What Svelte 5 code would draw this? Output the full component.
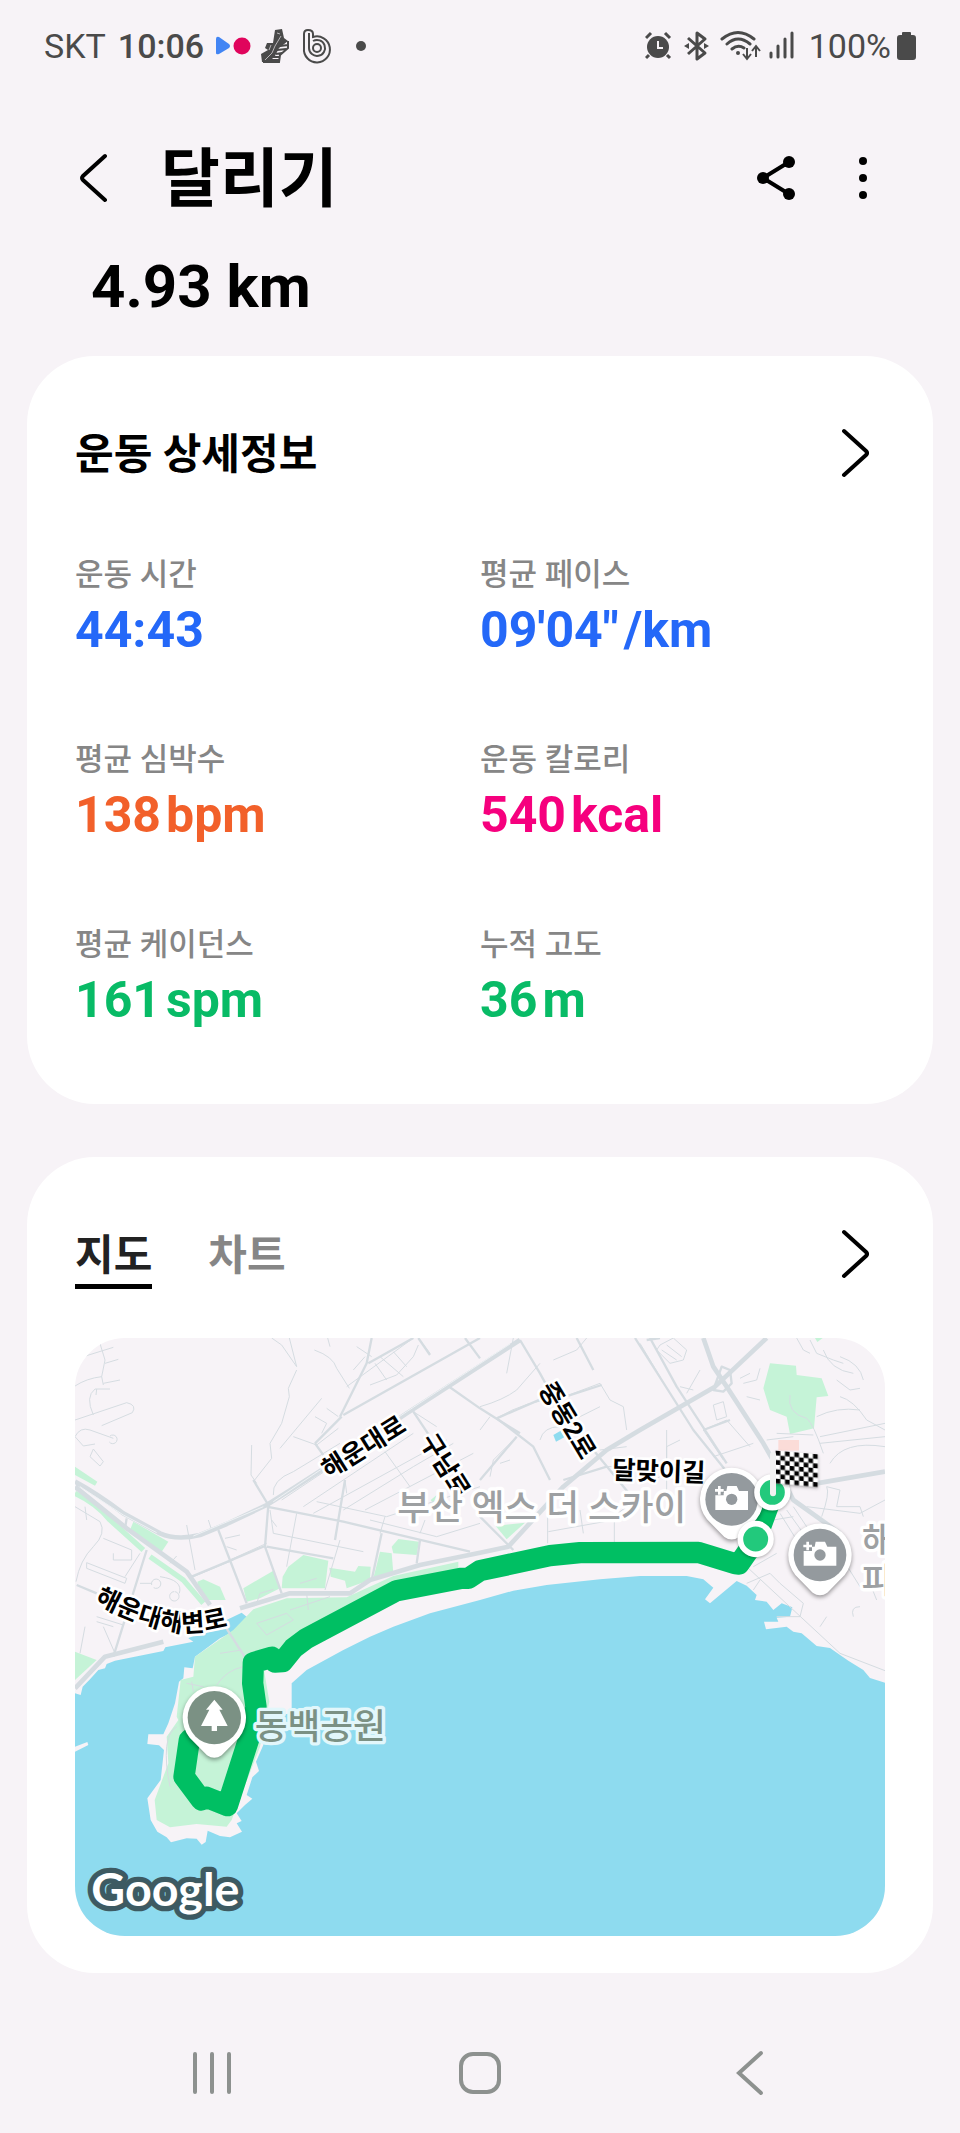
<script>
  const metrics = [
    { label: '운동 시간', value: '44:43', unit: '', tone: 'blue' },
    { label: '평균 페이스', value: '09\'04"', unit: '/km', tone: 'blue' },
    { label: '평균 심박수', value: '138', unit: 'bpm', tone: 'orange' },
    { label: '운동 칼로리', value: '540', unit: 'kcal', tone: 'pink' },
    { label: '평균 케이던스', value: '161', unit: 'spm', tone: 'green' },
    { label: '누적 고도', value: '36', unit: 'm', tone: 'green' },
  ];

  const tabs = [
    { id: 'map', label: '지도' },
    { id: 'chart', label: '차트' },
  ];

  let activeTab = $state('map');

  const photoSpots = [
    { x: 2015, y: 538 },
    { x: 2280, y: 705 },
  ];

  // dark squares of the finish flag
  const flagCells = [];
  for (let row = 0; row < 7; row += 1) {
    for (let col = 0; col < 9; col += 1) {
      if ((row + col) % 2 === 0) {
        flagCells.push({ x: col * 14, y: row * 14 });
      }
    }
  }
</script>

{#snippet chevron()}
  <svg width="28" height="52" viewBox="0 0 28 52" aria-hidden="true">
    <path d="M3 4 L25 24 Q27 26 25 28 L3 48" class="line" />
  </svg>
{/snippet}

<div class="screen">
  <div class="status-bar">
    <div class="status-left">
      <span>SKT</span>
      <span class="clock">10:06</span>
      <svg class="status-apps" width="156" height="40" viewBox="0 0 156 40" aria-hidden="true">
        <path d="M1 13 Q1 10 4 11 L14 18 Q16 20 14 22 L4 28 Q1 29 1 27Z" fill="#4285f4" />
        <circle cx="27" cy="20" r="8.500" fill="#e0045c" />
        <path
          d="M47 36 L46 28 53 24 50 22 52 17 58 17 60 4 67 3 69 12 73 15 64 22 60 30 54 36Z"
          fill="#4a4a4a"
        />
        <path
          d="M73 15 L73 22 65 29 64 36 H48 M65 20 L73 19 M62 24 L71 23 M61 28 L67 27 M58 31 H65 M55 34 H64"
          stroke="#4a4a4a"
          stroke-width="2"
          fill="none"
        />
        <path
          d="M66 10 L60 20 57 27 50 34 M62 7 L65 8 M56 19 L54 24"
          stroke="#b9b6b9"
          fill="none"
        />
        <g fill="none" stroke="#4a4a4a" stroke-width="2">
          <path d="M89 22 V8 Q89 4 93 4 Q98 4 98 8 V11 A13 13 0 1 1 89 22Z" />
          <path d="M94 7 V22 A8 8 0 1 0 98 15" />
          <circle cx="102" cy="22" r="4" />
        </g>
        <circle cx="146" cy="20" r="5" fill="#4a4a4a" />
      </svg>
    </div>
    <div class="status-right">
      <svg width="150" height="40" viewBox="0 0 150 40" aria-hidden="true">
        <g fill="#4a4a4a">
          <circle cx="13" cy="21" r="11" />
          <path d="M4 29 L1 32 M22 29 L25 32 M1 12 L6 7 M25 12 L20 7" stroke="#4a4a4a" stroke-width="3" />
          <path d="M13 15 V22 H18" stroke="#f7f3f7" stroke-width="2" fill="none" />
          <path d="M39 20 l5 -3 v6Z M64 20 l-5 -3 v6Z" />
          <circle cx="93" cy="27" r="2" />
        </g>
        <g fill="none" stroke="#4a4a4a" stroke-width="3">
          <path d="M43 12 L60 27 52 33 V7 L60 13 43 28" stroke-linejoin="round" />
          <path d="M77 13 Q93 0 109 13 M82 18 Q93 8 105 18 M87 23 Q93 18 99 22" stroke-linecap="round" />
          <path d="M102 22 V32 M98 28 L102 33 106 28 M111 31 V21 M107 25 L111 20 115 25" stroke-width="2" />
          <path d="M126 27 V31 M133 20 V31 M140 13 V31 M147 7 V31" stroke-linecap="round" />
        </g>
      </svg>
      <span>100%</span>
      <svg width="19" height="28" viewBox="0 0 19 28" aria-hidden="true">
        <path
          d="M5 1 Q5 0 6 0 H13 Q14 0 14 1 V3 H16 Q19 3 19 6 V25 Q19 28 16 28 H3 Q0 28 0 25 V6 Q0 3 3 3 H5Z"
          fill="#4a4a4a"
        />
      </svg>
    </div>
  </div>

  <header class="app-bar">
    <button class="icon-button" aria-label="뒤로">
      <svg width="28" height="52" viewBox="0 0 28 52" aria-hidden="true">
        <path d="M26 4 L4 24 Q2 26 4 28 L26 48" class="line" />
      </svg>
    </button>
    <h1>달리기</h1>
    <button class="icon-button" aria-label="공유">
      <svg width="40" height="44" viewBox="0 0 40 44" aria-hidden="true">
        <path d="M33 6 L7 22 33 38" fill="none" stroke="#000" stroke-width="4" />
        <circle cx="33" cy="6" r="6" />
        <circle cx="7" cy="22" r="6" />
        <circle cx="33" cy="38" r="6" />
      </svg>
    </button>
    <button class="icon-button" aria-label="더보기">
      <svg width="8" height="44" viewBox="0 0 8 44" aria-hidden="true">
        <circle cx="4" cy="5" r="4" />
        <circle cx="4" cy="22" r="4" />
        <circle cx="4" cy="39" r="4" />
      </svg>
    </button>
  </header>

  <p class="distance">4.93 km</p>

  <main>
    <section class="card details">
      <div class="card-header">
        <h2>운동 상세정보</h2>
        <button class="icon-button" aria-label="운동 상세정보 열기">{@render chevron()}</button>
      </div>
      <dl class="metrics">
        {#each metrics as metric (metric.label)}
          <div class="metric">
            <dt>{metric.label}</dt>
            <dd class={metric.tone}>
              <span>{metric.value}</span>
              {#if metric.unit}<span>{metric.unit}</span>{/if}
            </dd>
          </div>
        {/each}
      </dl>
    </section>

    <section class="card">
      <div class="card-header">
        <div class="tabs" role="tablist">
          {#each tabs as tab (tab.id)}
            <button
              class="tab"
              class:active={activeTab === tab.id}
              role="tab"
              aria-selected={activeTab === tab.id}
              onclick={() => (activeTab = tab.id)}>{tab.label}</button
            >
          {/each}
        </div>
        <button class="icon-button" aria-label="지도 열기">{@render chevron()}</button>
      </div>

      <svg class="map" viewBox="45 54 2430 1794" role="img" aria-label="달리기 경로">
        <rect x="45" y="54" width="2430" height="1794" fill="#f7f3f7" />

        <!-- sea -->
        <path
          class="water"
          d="M45 1120 L62 1125 68 1100 90 1078 115 1050 135 1045 140 1032 165 1022 310 993 316 982 400 965 385 955 545 878 572 900 520 935 480 955 405 1010 398 1045 373 1042 370 1075 357 1085 345 1150 325 1210 310 1243 265 1243 262 1272 297 1276 312 1290 302 1380 280 1410 262 1435 272 1500 292 1535 320 1552 333 1567 380 1555 410 1556 425 1574 437 1566 443 1532 480 1548 510 1552 546 1535 530 1510 545 1503 530 1480 555 1455 577 1436 560 1425 577 1372 597 1353 588 1325 610 1275 622 1190 695 1180 695 1090 740 1050 850 990 930 950 1000 920 1110 880 1260 840 1360 812 1460 795 1620 778 1740 768 1880 768 1930 778 1960 803 1935 838 1950 850 2030 783 2060 797 2090 825 2085 840 2120 845 2140 870 2165 850 2197 862 2190 890 2150 893 2155 905 2112 905 2118 928 2180 920 2200 935 2225 940 2270 978 2310 984 2365 1022 2410 1050 2430 1074 2475 1088 V1848 H45 V1295 L85 1275 82 1266 45 1280Z"
        />
        <path class="water" d="M1480 345 L1502 332 1513 352 1488 365Z" />

        <!-- parks and greenways -->
        <g class="park">
          <path
            d="M405 1010 L520 930 580 868 680 835 860 832 1000 768 1195 725 1195 745 1000 840 700 980 612 1050 628 1145 600 1280 515 1500 500 1520 410 1512 330 1522 290 1500 284 1440 325 1330 320 1250 355 1200 350 1190 362 1080 400 1070Z"
          />
          <path d="M45 440 L112 485 105 497 45 465Z" />
          <path d="M220 605 L325 665 305 695 210 630Z" />
          <path d="M412 785 L430 778 480 800 497 840 445 840 415 800Z" />
          <path d="M550 805 L640 752 660 805 600 835 560 845Z" />
          <path d="M685 740 L730 705 805 722 795 805 665 805 668 770Z" />
          <path d="M808 743 L885 755 895 738 932 740 930 780 860 805 855 782 812 770Z" />
          <path d="M960 695 L995 700 1000 760 940 775Z" />
          <path d="M995 680 L1015 657 1077 665 1070 705 1000 700Z" />
          <path d="M1307 618 L1395 608 1340 658Z" />
          <path d="M45 995 L110 1020 45 1080Z" />
          <path d="M1112 540 L1130 525 1120 550Z" />
          <path d="M2130 130 L2208 137 2210 165 2285 175 2305 228 2270 232 2262 325 2190 342 2180 290 2130 270 2110 205Z" />
          <path d="M2265 54 L2288 54 2272 66Z" />
        </g>
        <path class="greenway" d="M45 520 Q110 550 150 600 L250 690 M270 710 L370 780 430 850" />
        <rect x="2155" y="360" width="62" height="32" fill="#fbdcd8" />

        <!-- side streets -->
        <path
          class="road minor"
          d="M45 198 Q80 175 125 170 L135 120 115 54 M70 110 L160 82 M135 130 L175 118 M130 190 L180 180 M125 170 L130 195 M100 285 Q75 230 105 207 H150 M110 207 L108 225 M45 300 L200 248 Q232 255 217 278 L125 317 M45 350 Q60 320 90 330 L160 355 M45 350 L70 378 105 372 M150 348 a13 13 0 1 1 -2 18 M90 410 L100 387 130 425 120 438Z"
        />
        <path
          class="road minor"
          d="M635 54 L665 75 710 140 688 54 M710 150 L685 205 688 230 665 310 630 370 635 415 580 485 M575 375 L573 465 590 490 M763 90 Q820 110 830 145 L868 205 M803 54 L810 80 M660 385 L785 235 M700 350 L770 375 835 325 M765 290 L800 310 785 340 M800 265 L835 290 M880 150 L915 110 M640 525 Q635 480 700 455 L840 370 M665 540 L860 410 M730 560 L1060 340 M760 580 L1160 360 M770 545 L980 590 1260 500 M850 570 L1060 440 1180 370 M915 570 L1240 400 M975 395 L1050 500 M1130 320 L1060 275"
        />
        <path
          class="road minor"
          d="M630 570 L640 640 910 695 M635 600 L650 620 M710 580 L680 740 M855 480 L860 520 M930 600 L1130 650 1260 610 M975 590 L960 640 M1095 600 L1080 640 M840 660 L795 810 M380 615 L405 750 M445 600 L455 630 M495 655 L540 645 M500 680 L530 690 M400 770 L520 720 M510 720 L620 670 M590 850 L600 820 640 808 M590 910 L680 880 700 900 620 945Z M690 870 L810 830 M740 820 L745 870 M720 790 L770 775 M330 730 L350 708"
        />
        <path
          class="road minor"
          d="M45 560 L120 605 Q140 640 100 680 Q60 720 48 785 M75 560 L80 600 M130 655 L215 690 V720 H160 V700 M80 728 L200 775 195 790 80 745Z M195 770 L240 700 M110 890 L190 915 M110 905 L160 920 M275 795 a14 14 0 1 1 6 8 M300 770 Q370 780 358 820 M342 815 a14 14 0 1 0 2 0 M240 790 L275 790 M165 1000 L130 920 M75 920 L60 1000 M480 1000 L545 990 M470 1095 Q500 1050 550 1040 M380 1090 L430 1100 M395 1085 L400 1115 M330 1400 Q315 1330 320 1280 Q325 1235 350 1220"
        />
        <path
          class="road minor"
          d="M860 200 L1060 54 M945 130 L980 180 M960 110 L1030 170 M1000 95 L1040 140 M930 195 L1010 165 1060 110 1075 75 M890 80 L935 110 M1075 54 L1110 100"
        />
        <path
          class="road minor"
          d="M1260 260 Q1330 240 1370 210 L1440 130 M1310 295 Q1400 240 1500 235 L1620 190 1650 240 1690 260 M1340 160 L1360 54 M1550 54 L1600 150 M1480 120 L1550 90 1580 54 M1440 360 Q1450 320 1500 320 L1620 260 M1370 350 L1300 420 1290 470 M1320 430 L1350 420 M1260 330 L1290 290 M1690 260 L1700 330 M1620 390 L1700 380 M1640 440 L1760 440 M1780 480 L1820 460 1820 380 M1820 380 L1860 360 M1820 330 V540"
        />
        <path
          class="road minor"
          d="M1790 90 L1830 130 1870 120 1880 90 1840 54 1800 75Z M1805 90 L1850 120 M1820 75 L1865 110 M1740 70 L1800 170 M1860 200 L1900 210 M1880 220 L1920 150 M1960 255 L1990 245 2000 290 1970 300Z M1930 330 L2000 300 2070 380 M1960 410 L2080 370 M1930 330 L1990 420 M2050 190 L2090 180 2100 145 M2060 230 L2100 240 M2070 160 L2040 175"
        />
        <path
          class="road minor"
          d="M2210 54 L2230 90 2250 100 M2250 60 L2270 100 2320 120 2350 130 M2290 90 Q2310 150 2380 160 M2340 110 Q2400 130 2410 180 M2330 180 L2370 210 2400 205 M2340 230 Q2380 240 2420 300 L2475 330 M2270 290 Q2330 260 2400 270 M2280 350 L2475 310 M2280 370 L2475 350 M2310 430 Q2350 360 2475 380 M2190 225 Q2180 280 2240 295 Q2260 310 2290 400 M2150 340 L2260 345 M2120 360 L2200 350 M2285 590 Q2310 520 2300 500 L2340 510 2330 560 2400 560 2410 590 M2240 560 L2400 580 2475 540"
        />
        <path
          class="road minor"
          d="M1463 560 V670 M1663 600 V668 M1465 635 L1660 600 M1560 570 L1570 640 M1660 590 L1700 560 M2160 580 L2210 660 M2180 570 L2230 640 M2200 560 L2260 650 M2140 600 L2200 590 M2060 790 L2130 760 2160 790 2230 850 2220 890 2150 890 M2060 740 L2340 1000 2475 1052 M2080 740 L2150 700 M2100 780 L2080 810 M2280 920 L2300 890 M2380 890 Q2370 860 2400 860 M2430 790 L2450 840 M2350 720 L2400 800"
        />

        <!-- through roads -->
        <path
          class="road medium"
          d="M840 290 L920 130 935 54 M925 130 L1060 54 M850 285 L1260 54 M765 370 L845 290 M765 370 L790 405 M580 480 L625 555 615 680 665 820 M855 480 L825 660 M620 560 L850 605 1230 695 M620 680 L820 715 M475 630 L560 850 M395 770 L615 678 M965 640 L935 780 M1080 660 L1070 730 M1060 275 L1110 350 M1160 195 L1260 265 1380 340 M1075 54 L1110 105 M1215 54 L1260 115 M200 595 L195 625 M50 795 L110 820 M260 690 L160 1010 M490 910 L560 1020"
        />
        <path
          class="road medium"
          d="M1380 60 L1440 160 1500 270 M1310 295 L1460 230 M1310 295 L1420 380 1470 480 M1500 235 L1625 195 M1600 390 L1740 560 M1550 54 L1600 150 M1800 54 L1760 60 M1725 54 L1900 330 2020 480 M1770 54 L1850 200 2000 430 M1985 140 L1960 210 1990 215 2015 190 2010 150Z M1930 330 L2010 300 M1260 590 L1360 690 M1370 350 L1260 480 M1510 480 L1640 440"
        />
        <path
          class="road major"
          d="M45 485 Q110 520 190 580 L300 640 Q350 662 420 645 L500 612 620 555 700 505 840 415 1040 280 1380 60 M45 500 L200 625 380 755 450 855 M2120 54 L1965 200 1740 330 1640 390 1510 500 1345 680 1260 698 1080 735 930 780 870 820 690 820 540 865 M1930 54 L1960 140 2000 200 2110 370 2150 440 2200 540 2340 640 M2475 455 L2270 490 M45 1105 L135 1010 310 965"
        />
        <path class="road core" d="M640 545 L1040 275 1350 72 M60 500 L190 585 290 638 M400 648 L610 560" />

        <!-- route -->
        <path
          class="route"
          d="M2135 530 L2087 660 2037 732 2025 731 1915 697 1560 698 1470 707 1260 752 1225 775 1205 775 1010 812 740 955 700 985 668 1025 645 1026 635 1012 580 1028 578 1090 588 1160 575 1230 502 1457 440 1432 424 1440 372 1370 388 1260 463 1200"
        />

        <g class="road-label">
          <text transform="translate(806 478) rotate(-32)">해운대로</text>
          <text transform="translate(1078 362) rotate(58)">구남로</text>
          <text transform="translate(1434 206) rotate(59)">중동2로</text>
          <text transform="translate(1656 476) rotate(2)">달맞이길</text>
          <path id="beach-road" d="M102 848 Q230 915 340 934 Q430 945 570 898" fill="none" stroke="none" />
          <text><textPath href="#beach-road">해운대해변로</textPath></text>
        </g>

        <text class="place" x="1012" y="600">부산 엑스 더 스카이</text>
        <text class="place" x="2405" y="700">해</text>
        <text class="place" x="2405" y="820">파</text>
        <text class="place green-place" x="584" y="1256">동백공원</text>

        {#each photoSpots as spot (spot.x)}
          <g transform="translate({spot.x} {spot.y})">
            <path class="pin" d="M-74 60 A95 95 0 1 1 74 60 L22 113 Q0 128 -22 113Z" />
            <circle r="79" fill="#949a9e" />
            <path d="M-49 -12 H-24 V-25 H-16 L-13 -40 H15 L22 -25 H49 V32 H-49Z" fill="#fff" />
            <path d="M-37 -40 V-14 M-50 -27 H-24" stroke="#949a9e" stroke-width="16" />
            <path d="M-37 -40 V-14 M-50 -27 H-24" stroke="#fff" stroke-width="8" />
            <circle r="17" fill="#949a9e" />
          </g>
        {/each}

        <g transform="translate(463 1193)">
          <path class="pin" d="M-74 60 A95 95 0 1 1 74 60 L22 113 Q0 128 -22 113Z" />
          <circle r="80" fill="#7b9184" />
          <path d="M0 -54 L25 -24 H15 L40 25 H8 V40 H-8 V25 H-40 L-15 -24 H-25Z" fill="#fff" />
        </g>

        <g class="stop">
          <circle cx="2137" cy="517" r="46" />
          <circle cx="2087" cy="657" r="46" />
        </g>
        <g class="flag" transform="translate(2147 392) skewY(5)">
          <rect width="127" height="98" fill="#fff" />
          {#each flagCells as cell}
            <rect x={cell.x} y={cell.y} width="14" height="14" />
          {/each}
        </g>
        <path d="M2139 404 V520" stroke="#f1f1f1" stroke-width="18" stroke-linecap="round" />

        <text class="google" x="94" y="1758">Google</text>
      </svg>
    </section>
  </main>

  <nav class="system-nav">
    <button aria-label="최근 앱">
      <svg width="48" height="48" viewBox="0 0 48 48" aria-hidden="true">
        <path d="M7 5 V43 M24 5 V43 M41 5 V43" />
      </svg>
    </button>
    <button aria-label="홈">
      <svg width="48" height="48" viewBox="0 0 48 48" aria-hidden="true">
        <rect x="5" y="5" width="38" height="38" rx="12" />
      </svg>
    </button>
    <button aria-label="이전">
      <svg width="48" height="48" viewBox="0 0 48 48" aria-hidden="true">
        <path d="M37 4 L15 24 37 44" />
      </svg>
    </button>
  </nav>
</div>

<style>
  :global(body) {
    background: #f7f3f7;
  }

  .screen {
    color: #000;
    font-family: Roboto, 'Noto Sans CJK KR', sans-serif;
  }

  button {
    padding: 0;
    border: 0;
    background: none;
    color: inherit;
    font: inherit;
    cursor: pointer;
  }

  .status-bar {
    display: flex;
    justify-content: space-between;
    align-items: center;
    height: 92px;
    padding: 0 44px;
    box-sizing: border-box;
    color: #4a4a4a;
    font-size: 34px;
  }

  .status-left,
  .status-right {
    display: flex;
    align-items: center;
  }

  .clock {
    margin-left: 12px;
    font-weight: 500;
  }

  .status-apps {
    margin-left: 11px;
  }

  .status-right span {
    margin: 0 6px 0 14px;
  }

  .app-bar {
    display: flex;
    align-items: center;
    height: 80px;
    margin-top: 46px;
    padding: 0 67px 0 63px;
  }

  .icon-button {
    display: flex;
    flex: none;
    align-items: center;
    justify-content: center;
    width: 60px;
    height: 60px;
  }

  .icon-button + .icon-button {
    margin-left: 27px;
  }

  .line {
    fill: none;
    stroke: #000;
    stroke-width: 4;
    stroke-linecap: round;
  }

  h1 {
    flex: 1;
    margin: 0 0 0 38px;
    padding-top: 4px;
    font-size: 64px;
    font-weight: 700;
    line-height: 76px;
  }

  .distance {
    margin: 34px 0;
    padding: 0 91px;
    font-size: 60px;
    font-weight: 700;
    line-height: 70px;
  }

  main {
    display: grid;
    gap: 53px;
    padding: 0 27px;
  }

  .card {
    padding: 57px 48px 37px;
    border-radius: 68px;
    background: #fff;
  }

  .card.details {
    padding-bottom: 74px;
  }

  .card-header {
    display: flex;
    justify-content: space-between;
    align-items: center;
    height: 80px;
  }

  h2 {
    margin: 0;
    padding-top: 4px;
    font-size: 42px;
    font-weight: 700;
    line-height: 60px;
  }

  .metrics {
    display: grid;
    grid-template-columns: 1fr 1fr;
    row-gap: 78px;
    margin: 60px 0 0;
  }

  dt {
    padding-top: 2px;
    color: #868686;
    font-size: 31px;
    font-weight: 500;
    line-height: 40px;
  }

  dd {
    display: flex;
    gap: 5px;
    margin: 5px 0 0;
    font-size: 50px;
    font-weight: 700;
    line-height: 60px;
  }

  .blue {
    color: #2468f8;
  }

  .orange {
    color: #f2602a;
  }

  .pink {
    color: #f6007e;
  }

  .green {
    color: #08bb66;
  }

  .tabs {
    display: flex;
    gap: 56px;
  }

  .tab {
    padding-top: 8px;
    border-bottom: 5px solid transparent;
    color: #868686;
    font-size: 42px;
    font-weight: 700;
    line-height: 56px;
  }

  .tab.active {
    border-color: #000;
    color: #222;
  }

  .map {
    display: block;
    width: 100%;
    height: auto;
    margin-top: 44px;
    border-radius: 50px;
  }

  .water {
    fill: #8edbef;
  }

  .park {
    fill: #c5f3d7;
  }

  .greenway {
    fill: none;
    stroke: #c5f3d7;
    stroke-width: 16;
  }

  .road {
    fill: none;
    stroke: #d5dce1;
    stroke-linejoin: round;
  }

  .minor {
    stroke-width: 3;
  }

  .medium {
    stroke-width: 7;
  }

  .major {
    stroke-width: 14;
  }

  .core {
    stroke: #eef1f4;
    stroke-width: 3;
  }

  .route {
    fill: none;
    stroke: #00bf63;
    stroke-width: 64;
    stroke-linejoin: round;
  }

  .road-label text,
  .place,
  .google {
    paint-order: stroke;
    stroke: #fff;
    stroke-linejoin: round;
  }

  .road-label text {
    font-size: 76px;
    font-weight: 700;
    stroke-width: 16;
  }

  .place {
    fill: #9da0a2;
    font-size: 107px;
    font-weight: 500;
    stroke-width: 20;
  }

  .green-place {
    fill: #7b9184;
    stroke: #e2f7fb;
  }

  .pin {
    fill: #fff;
    filter: drop-shadow(0 6px 6px rgba(0, 0, 0, 0.4));
  }

  .stop circle {
    fill: #22c97c;
    stroke: #fff;
    stroke-width: 17;
    filter: drop-shadow(0 3px 4px rgba(0, 0, 0, 0.3));
  }

  .flag {
    filter: drop-shadow(0 4px 4px rgba(0, 0, 0, 0.3));
  }

  .google {
    fill: #fff;
    font-family: Lato, sans-serif;
    font-size: 140px;
    font-weight: 700;
    stroke: #3d5a62;
    stroke-width: 32;
  }

  .system-nav {
    display: grid;
    grid-template-columns: repeat(3, 1fr);
    padding: 70px 78px 30px;
  }

  .system-nav button {
    display: flex;
    align-items: center;
    justify-content: center;
    height: 60px;
  }

  .system-nav svg {
    fill: none;
    stroke: #8d918f;
    stroke-width: 4;
    stroke-linecap: round;
  }
</style>
